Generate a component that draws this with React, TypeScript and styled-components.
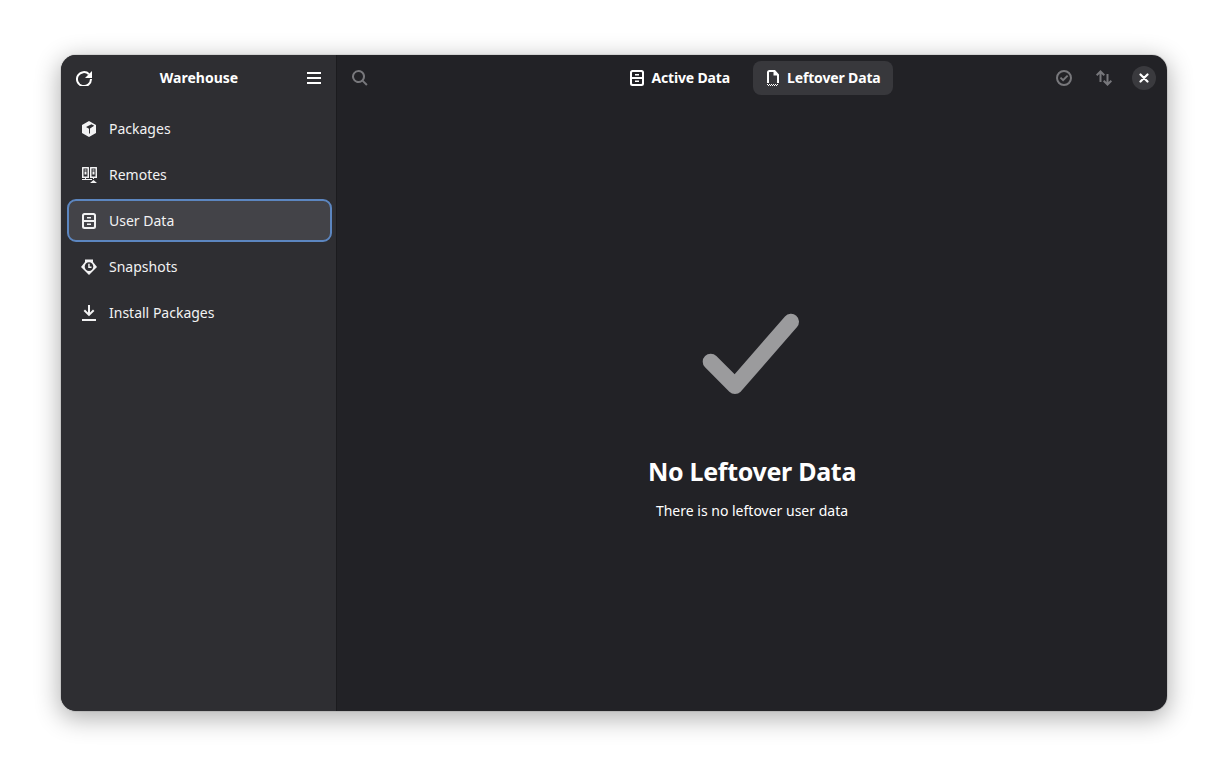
import styled, { createGlobalStyle } from 'styled-components';
import type { ReactNode } from 'react';

const GlobalStyle = createGlobalStyle`
	html, body {
		margin: 0;
		padding: 0;
		height: 100%;
		background: #ffffff;
	}
	body {
		font-family: 'Noto Sans', 'Open Sans', sans-serif;
		overflow: hidden;
	}
`;

const Page = styled.div`
	box-sizing: border-box;
	width: 1228px;
	height: 778px;
	padding: 55px 61px 67px 61px;
`;

const Window = styled.div`
	display: flex;
	width: 100%;
	height: 100%;
	border-radius: 15px;
	overflow: hidden;
	background: #222226;
	box-shadow: 0 0 0 1px rgba(0, 0, 0, 0.08), 0 6px 24px 2px rgba(0, 0, 0, 0.3);
`;

const Sidebar = styled.aside`
	display: flex;
	flex-direction: column;
	flex: 0 0 275px;
	background: #2e2e32;
	border-right: 1px solid #1b1b1e;
`;

const SidebarHeader = styled.header`
	display: flex;
	align-items: center;
	justify-content: space-between;
	height: 46px;
	padding: 0 14px 0 15px;
`;

const AppTitle = styled.h1`
	margin: 0;
	padding-bottom: 2px;
	font-size: 14px;
	font-weight: 700;
	color: #ffffff;
`;

const HeaderIcon = styled.span`
	display: flex;
	width: 16px;
	height: 16px;
	color: #ffffff;
`;

const NavList = styled.nav`
	display: flex;
	flex-direction: column;
	gap: 3px;
	padding: 6px 4px 0 6px;
`;

const NavRow = styled.div<{ $active?: boolean }>`
	box-sizing: border-box;
	display: flex;
	align-items: center;
	gap: 12px;
	height: 43px;
	padding: 0 ${(props) => (props.$active ? '12px' : '14px')};
	border-radius: 9px;
	border: ${(props) => (props.$active ? '2px solid #5c86c0' : 'none')};
	background: ${(props) => (props.$active ? '#434348' : 'transparent')};
	color: #f2f2f3;
	font-size: 14px;
`;

const Main = styled.main`
	display: flex;
	flex-direction: column;
	flex: 1;
	min-width: 0;
`;

const TopBar = styled.header`
	display: grid;
	grid-template-columns: 1fr auto 1fr;
	align-items: center;
	height: 46px;
	padding: 0 6px 0 15px;
`;

const BarStart = styled.div`
	display: flex;
	color: #77777b;
`;

const BarEnd = styled.div`
	display: flex;
	align-items: center;
	justify-content: flex-end;
	gap: 6px;
	color: #77777b;
`;

const BarButton = styled.span`
	display: flex;
	align-items: center;
	justify-content: center;
	width: 34px;
	height: 34px;
`;

const Tabs = styled.div`
	display: flex;
	align-items: center;
	gap: 11px;
	margin-right: 3px;
`;

const Tab = styled.div<{ $active?: boolean }>`
	display: flex;
	align-items: center;
	gap: 6px;
	height: 34px;
	padding: 0 12px;
	border-radius: 8px;
	background: ${(props) => (props.$active ? '#38383c' : 'transparent')};
	color: #ffffff;
	font-size: 14px;
	font-weight: 700;
	letter-spacing: -0.15px;
`;

const TabLabel = styled.span`
	padding-bottom: 2px;
`;

const CloseButton = styled.button`
	display: flex;
	align-items: center;
	justify-content: center;
	width: 24px;
	height: 24px;
	padding: 0;
	border: none;
	border-radius: 50%;
	background: #3a3a3e;
	color: #ffffff;
`;

const Status = styled.section`
	display: flex;
	flex: 1;
	flex-direction: column;
	align-items: center;
	padding-top: 195px;
	color: #ffffff;
`;

const StatusIcon = styled.svg`
	width: 128px;
	height: 128px;
	color: #9b9b9d;
`;

const StatusTitle = styled.h2`
	margin: 29px 0 0 0;
	font-size: 25px;
	line-height: 36px;
	font-weight: 700;
	letter-spacing: -0.3px;
`;

const StatusText = styled.p`
	margin: 12px 0 0 0;
	font-size: 14px;
	line-height: 20px;
`;

const Icon = ({ children }: { children: ReactNode }) => (
	<svg width="16" height="16" viewBox="0 0 16 16" fill="currentColor">
		{children}
	</svg>
);

const RefreshIcon = () => (
	<Icon>
		<path d="M13 4.200A7 7 0 1 0 15 9" fill="none" stroke="currentColor" strokeWidth="2" />
		<path d="M16 1v7H9z" />
	</Icon>
);

const MenuIcon = () => (
	<Icon>
		<path d="M1 2h14v2H1zM1 7h14v2H1zM1 12h14v2H1z" />
	</Icon>
);

const BoxIcon = () => (
	<Icon>
		<path
			fillRule="evenodd"
			d="M8 0l7 4v8l-7 4-7-4V4zM5 6l5.500-2.700 2.700 1.500L9 7.400v5.100H8V7.800z"
		/>
	</Icon>
);

const RemotesIcon = () => (
	<Icon>
		<path
			fillRule="evenodd"
			d="M1.500 0h6a.5.5 0 0 1 .5.500V10.500a.5.5 0 0 1-.5.5h-6a.5.5 0 0 1-.5-.5V.5a.5.5 0 0 1 .5-.5zM2.500 1.500v8h4v-8zM9.500 0h6a.5.5 0 0 1 .5.500V10.500a.5.5 0 0 1-.5.5h-6a.5.5 0 0 1-.5-.5V.5a.5.5 0 0 1 .5-.5zM10.500 1.500v8h4v-8zM3.500 2.500h2v1h-2zM3.500 4.500h2v3h-2zM11.500 2.500h2v1h-2zM11.500 4.500h2v3h-2zM4 11h1v1H4zM12 11h1v1h-1zM1 12h10v1H1zM12.500 13l3.500 3H9z"
		/>
	</Icon>
);

const DrawerIcon = () => (
	<Icon>
		<path
			fillRule="evenodd"
			d="M3.500 0h9A2.500 2.500 0 0 1 15 2.500v11a2.500 2.500 0 0 1-2.500 2.500h-9A2.500 2.500 0 0 1 1 13.500v-11A2.500 2.500 0 0 1 3.500 0zM3 2.800V7h10V2.800a.8.8 0 0 0-.8-.8H3.800a.8.8 0 0 0-.8.8zM3 9v4.200a.8.8 0 0 0 .8.8h8.400a.8.8 0 0 0 .8-.8V9zM6 4h4v1.500H6zM6 10.500h4V12H6z"
		/>
	</Icon>
);

const SnapshotIcon = () => (
	<Icon>
		<path
			fillRule="evenodd"
			d="M4 .5h8V3l4 5-8 8-8-8 4-5zM8 3.300a4.300 4.300 0 1 0 0 8.600 4.300 4.300 0 0 0 0-8.600zM7.200 4.800h1.500v2.800h1.800v1.400H7.200z"
		/>
	</Icon>
);

const DownloadIcon = () => (
	<Icon>
		<path d="M7 0h2v7.500l3-3 1.400 1.400L8 11.300 2.600 5.900 4 4.500l3 3zM1 14h14v2H1z" />
	</Icon>
);

const LeftoverIcon = () => (
	<Icon>
		<path
			fillRule="evenodd"
			d="M4.500 0h5.500L14 4.500V13h-2V5.500H8.500V2h-4a.5.5 0 0 0-.5.500V13H2V2.500A2.500 2.500 0 0 1 4.500 0z"
		/>
		<path d="M2 14h1v1H2zM4 14h1v1H4zM6 14h1v1H6zM8 14h1v1H8zM10 14h1v1h-1zM12 14h1v1h-1zM3 15h1v1H3zM5 15h1v1H5zM7 15h1v1H7zM9 15h1v1H9zM11 15h1v1h-1z" />
	</Icon>
);

const SearchIcon = () => (
	<Icon>
		<path
			fillRule="evenodd"
			d="M6.500 0a6.500 6.500 0 0 1 5.200 10.400l3.900 3.900-1.400 1.400-3.900-3.900A6.500 6.500 0 1 1 6.500 0zm0 2a4.500 4.500 0 1 0 0 9 4.500 4.500 0 0 0 0-9z"
		/>
	</Icon>
);

const CheckCircleIcon = () => (
	<Icon>
		<path
			fillRule="evenodd"
			d="M8 0a8 8 0 1 1 0 16A8 8 0 0 1 8 0zm0 2a6 6 0 1 0 0 12A6 6 0 0 0 8 2zM11 4.900l1.300 1.300-5.200 5.200-3.300-3.200L5.100 6.900l2 1.900z"
		/>
	</Icon>
);

const SwapIcon = () => (
	<Icon>
		<path d="M4.500 0L9 4.500 7.700 6 5.500 3.900V12h-2V3.900L1.300 6 0 4.500zM10.500 4h2v8.100l2.200-2.100L16 11.500 11.500 16 7 11.500 8.300 10l2.200 2.100z" />
	</Icon>
);

const CloseIcon = () => (
	<svg width="10" height="10" viewBox="0 0 10 10" stroke="currentColor" strokeWidth="2.200" strokeLinecap="round">
		<path d="M1.500 1.500l7 7M8.500 1.500l-7 7" />
	</svg>
);

const navItems = [
	{ label: 'Packages', icon: <BoxIcon /> },
	{ label: 'Remotes', icon: <RemotesIcon /> },
	{ label: 'User Data', icon: <DrawerIcon />, active: true },
	{ label: 'Snapshots', icon: <SnapshotIcon /> },
	{ label: 'Install Packages', icon: <DownloadIcon /> },
];

const App = () => {
	return (
		<Page>
			<GlobalStyle />
			<Window>
				<Sidebar>
					<SidebarHeader>
						<HeaderIcon>
							<RefreshIcon />
						</HeaderIcon>
						<AppTitle>Warehouse</AppTitle>
						<HeaderIcon>
							<MenuIcon />
						</HeaderIcon>
					</SidebarHeader>
					<NavList>
						{navItems.map((item) => (
							<NavRow key={item.label} $active={item.active}>
								{item.icon}
								{item.label}
							</NavRow>
						))}
					</NavList>
				</Sidebar>
				<Main>
					<TopBar>
						<BarStart>
							<SearchIcon />
						</BarStart>
						<Tabs>
							<Tab>
								<DrawerIcon />
								<TabLabel>Active Data</TabLabel>
							</Tab>
							<Tab $active>
								<LeftoverIcon />
								<TabLabel>Leftover Data</TabLabel>
							</Tab>
						</Tabs>
						<BarEnd>
							<BarButton>
								<CheckCircleIcon />
							</BarButton>
							<BarButton>
								<SwapIcon />
							</BarButton>
							<BarButton>
								<CloseButton>
									<CloseIcon />
								</CloseButton>
							</BarButton>
						</BarEnd>
					</TopBar>
					<Status>
						<StatusIcon viewBox="0 0 128 128">
							<path
								d="M22.700 65.700L47 90l56-64.300"
								fill="none"
								stroke="currentColor"
								strokeWidth="16"
								strokeLinecap="round"
								strokeLinejoin="round"
							/>
						</StatusIcon>
						<StatusTitle>No Leftover Data</StatusTitle>
						<StatusText>There is no leftover user data</StatusText>
					</Status>
				</Main>
			</Window>
		</Page>
	);
};

export default App;
